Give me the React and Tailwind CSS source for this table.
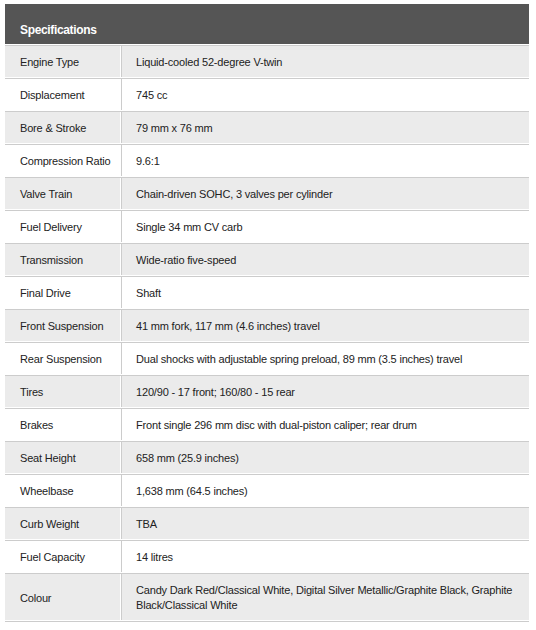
const specs = [
  ["Engine Type", "Liquid-cooled 52-degree V-twin"],
  ["Displacement", "745 cc"],
  ["Bore & Stroke", "79 mm x 76 mm"],
  ["Compression Ratio", "9.6:1"],
  ["Valve Train", "Chain-driven SOHC, 3 valves per cylinder"],
  ["Fuel Delivery", "Single 34 mm CV carb"],
  ["Transmission", "Wide-ratio five-speed"],
  ["Final Drive", "Shaft"],
  ["Front Suspension", "41 mm fork, 117 mm (4.6 inches) travel"],
  ["Rear Suspension", "Dual shocks with adjustable spring preload, 89 mm (3.5 inches) travel"],
  ["Tires", "120/90 - 17 front; 160/80 - 15 rear"],
  ["Brakes", "Front single 296 mm disc with dual-piston caliper; rear drum"],
  ["Seat Height", "658 mm (25.9 inches)"],
  ["Wheelbase", "1,638 mm (64.5 inches)"],
  ["Curb Weight", "TBA"],
  ["Fuel Capacity", "14 litres"],
  [
    "Colour",
    "Candy Dark Red/Classical White, Digital Silver Metallic/Graphite Black, Graphite Black/Classical White",
  ],
];

export default function App() {
  return (
    <div className="min-h-[630px] bg-white pt-[4px] pl-[5px] font-['Liberation_Sans',Arial,sans-serif] text-[11px] tracking-[-0.18px] text-[#222]">
      <div className="w-[524px]">
        <div className="h-[40px] bg-[#555555] pl-[15px] pt-[18px] text-[12px] font-bold leading-[16px] tracking-[-0.35px] text-white">
          Specifications
        </div>
        <div className="h-px bg-white" />
        <div className="h-px bg-[#cccccc]" />
        {specs.map(([label, value], i) => (
          <SpecRow key={label} label={label} value={value} shaded={i % 2 === 0} />
        ))}
      </div>
    </div>
  );
}

function SpecRow({ label, value, shaded }) {
  const bg = shaded ? "bg-[#ebebeb]" : "bg-white";
  return (
    <div>
      <div className="flex">
        <div className={`${bg} flex w-[115px] shrink-0 items-center pt-[2px] pl-[15px] leading-[15px]`}>
          {label}
        </div>
        <div className="w-px bg-white" />
        <div
          className={`${bg} flex min-h-[31px] flex-1 items-center border-l border-[#cccccc] pt-[9px] pb-[7px] pl-[14px] pr-[8px] leading-[15px]`}
        >
          {value}
        </div>
      </div>
      <div className="h-px bg-white" />
      <div className="h-px bg-[#cccccc]" />
    </div>
  );
}
